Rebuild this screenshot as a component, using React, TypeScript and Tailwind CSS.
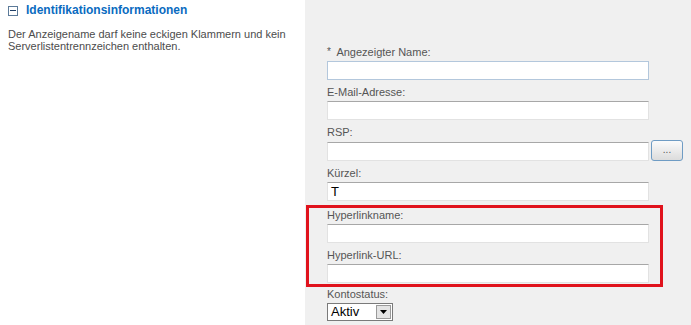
import React from "react";

const font = { fontFamily: '"Liberation Sans", Arial, sans-serif' };

function Label({ children }: { children: React.ReactNode }) {
  return <div className="h-[14px] text-[11px] leading-[14px] text-[#555555]">{children}</div>;
}

function TextInput({ value = "", focused = false }: { value?: string; focused?: boolean }) {
  return (
    <div
      className={
        "mt-[2px] h-[19px] w-[322px] bg-white border text-[13px] leading-[17px] pl-[3px] text-black " +
        (focused
          ? "border-[#b3c7dc] bg-[#fcfdff]"
          : "border-[#e2e2e2] border-t-[#a7a7a7]")
      }
    >
      {value}
    </div>
  );
}

export default function App() {
  return (
    <div className="flex w-[691px] h-[325px] bg-white overflow-hidden" style={font}>
      <div className="w-[305px] shrink-0 bg-white pl-[8px] pt-[3px]">
        <div className="flex items-center h-[14px]">
          <div className="w-[10px] h-[10px] border border-[#5c7a99] bg-white flex items-center justify-center mr-[8px] mt-[1px]">
            <div className="w-[6px] h-[1px] bg-[#1f3f66]" />
          </div>
          <span className="text-[12px] font-bold text-[#0a6bbf] leading-[14px]">Identifikationsinformationen</span>
        </div>
        <div className="mt-[11px] text-[11px] leading-[12px] text-[#4c4c4c]">
          Der Anzeigename darf keine eckigen Klammern und kein
          <br />
          Serverlistentrennzeichen enthalten.
        </div>
      </div>
      <div className="flex-1 bg-[#f0f0f0] pl-[1px] pt-[45px]">
        <div className="pl-[21px]">
          <Label>
            <span className="text-[10px] align-top">*</span>&nbsp; Angezeigter Name:
          </Label>
          <TextInput focused />
        </div>
        <div className="pl-[21px] mt-[5px]">
          <Label>E-Mail-Adresse:</Label>
          <TextInput />
        </div>
        <div className="pl-[21px] mt-[5px]">
          <Label>RSP:</Label>
          <div className="flex items-center">
            <TextInput />
            <div className="ml-[2px] mt-[1px] w-[32px] h-[21px] rounded-[3px] border border-[#6f9cc4] bg-gradient-to-b from-[#fbfbfb] to-[#dcdcdc] flex items-center justify-center text-[10px] leading-[10px] text-[#555] pb-[2px]">
              ...
            </div>
          </div>
        </div>
        <div className="pl-[21px] mt-[5px]">
          <Label>Kürzel:</Label>
          <TextInput value="T" />
        </div>
        <div className="mt-[4px] w-[357px] border-[3px] border-[#e0121c] pl-[18px] pb-[1px]">
          <Label>Hyperlinkname:</Label>
          <TextInput />
          <div className="mt-[5px]">
            <Label>Hyperlink-URL:</Label>
            <TextInput />
          </div>
        </div>
        <div className="pl-[21px]">
          <Label>Kontostatus:</Label>
          <div className="mt-[2px] w-[66px] h-[18px] bg-white border border-[#7a7a7a] flex items-center justify-between pl-[3px] pr-[1px]">
            <span className="text-[13px] leading-[16px] text-black">Aktiv</span>
            <div className="w-[15px] h-[14px] bg-[#e4e4e4] border border-[#9a9a9a] flex items-center justify-center">
              <svg width="7" height="4" viewBox="0 0 7 4">
                <polygon points="0,0 7,0 3.5,4" fill="#000" />
              </svg>
            </div>
          </div>
        </div>
      </div>
    </div>
  );
}
